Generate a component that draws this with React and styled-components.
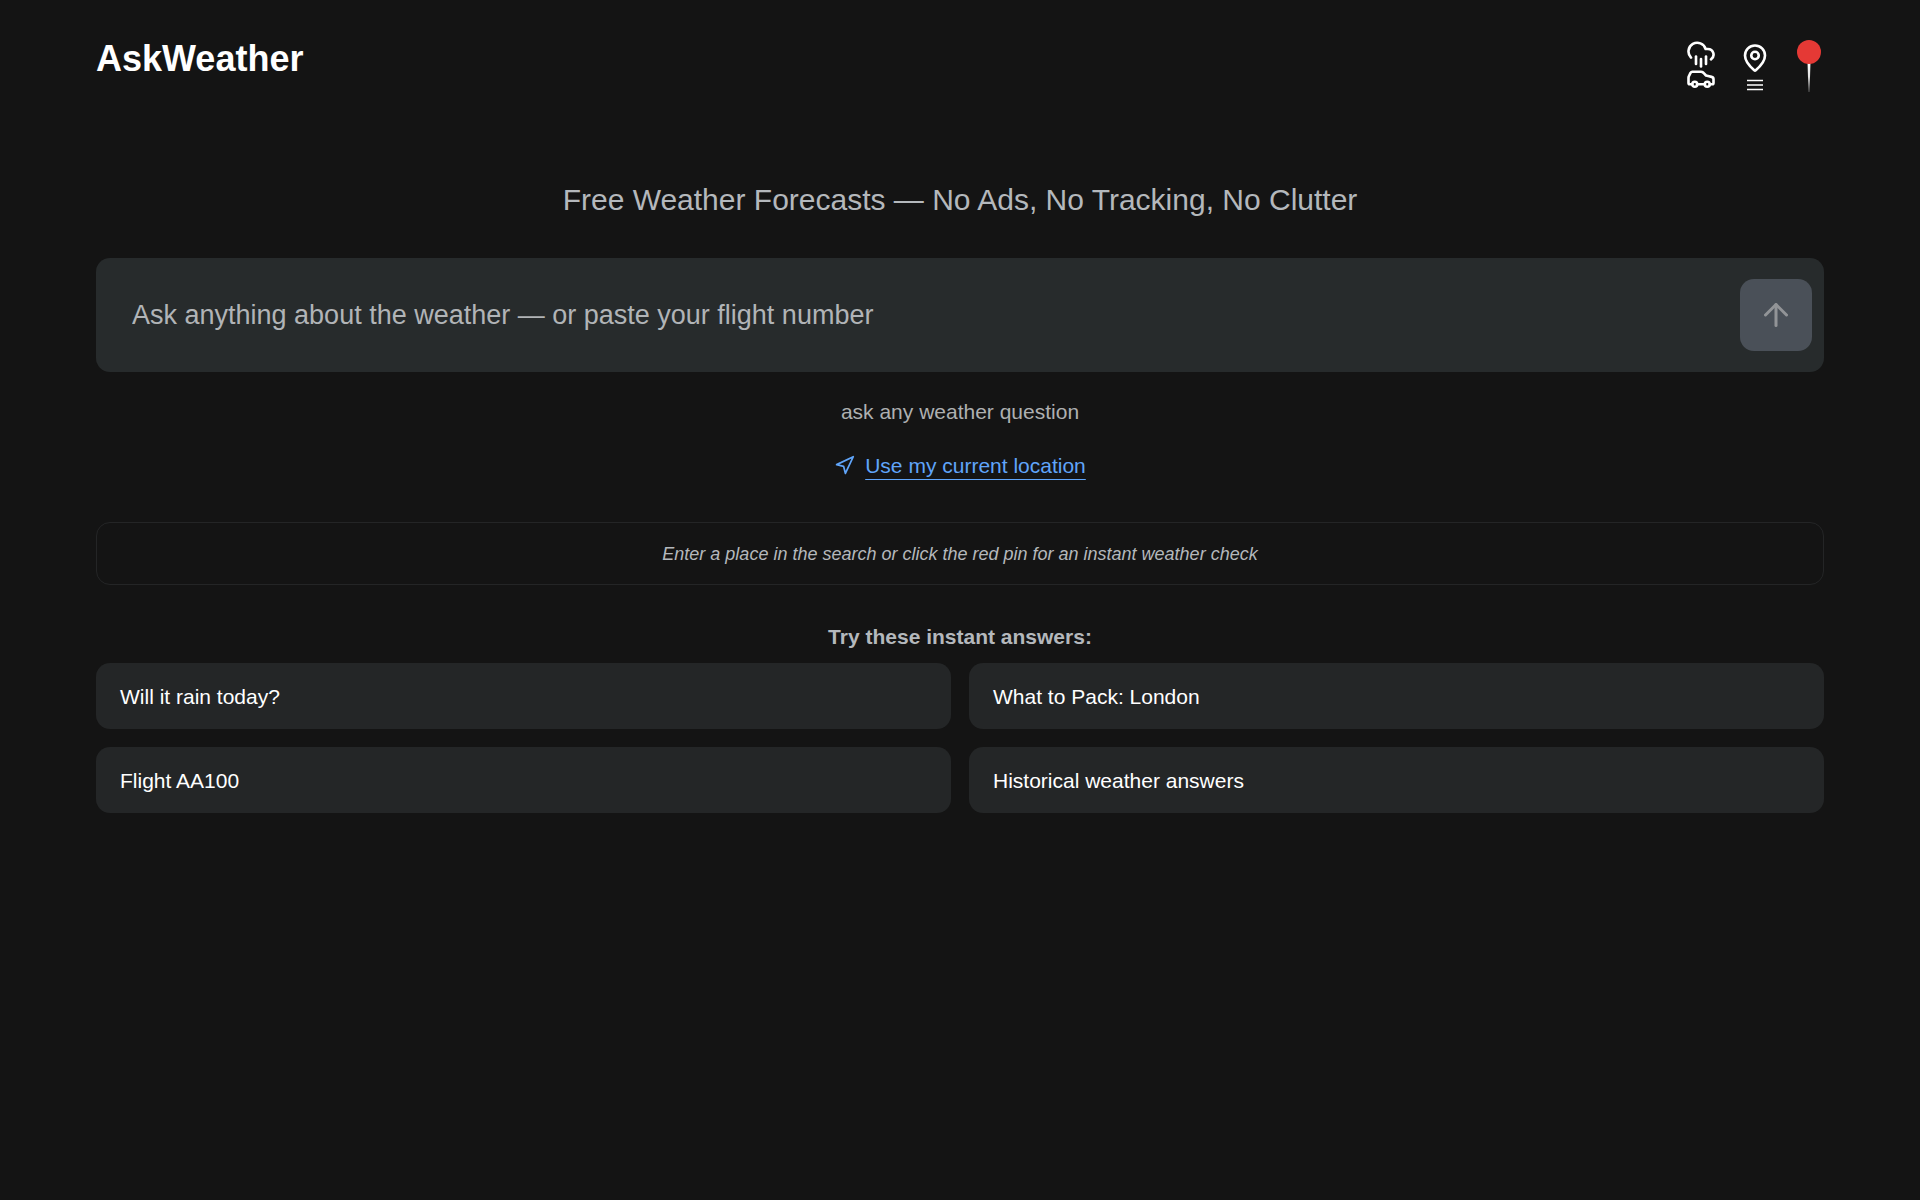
import React, { useState } from "react";
import styled, { createGlobalStyle } from "styled-components";
import { ArrowUp, Car, CloudRain, MapPin, Navigation } from "lucide-react";

const GlobalStyle = createGlobalStyle`
  * {
    box-sizing: border-box;
  }

  body {
    margin: 0;
    background: #141414;
    color: #ffffff;
    font-family: "Liberation Sans", Arial, sans-serif;
  }

  button,
  input {
    font-family: inherit;
  }
`;

const Page = styled.div`
  padding: 36px 96px;

  @media screen and (max-width: 568px) {
    padding: 24px 16px;
  }
`;

const Header = styled.header`
  display: flex;
  justify-content: space-between;
  align-items: flex-start;
  height: 60px;
`;

const Brand = styled.h1`
  margin: 0;
  font-size: 36px;
  line-height: 45px;
`;

const Nav = styled.nav`
  display: flex;
  gap: 24px;
`;

const IconButton = styled.button`
  display: flex;
  flex-direction: column;
  align-items: center;
  justify-content: flex-start;
  width: 30px;
  height: 60px;
  padding: ${(props) => props.$top || 0}px 0 0;
  border: 0;
  background: none;
  color: #ffffff;
  cursor: pointer;

  svg {
    flex-shrink: 0;
  }
`;

const CarIcon = styled(Car)`
  margin-top: -6px;
`;

const Lines = styled.svg`
  margin-top: 6px;
`;

const Tagline = styled.h2`
  margin: 84px 0 38px;
  color: #b4b8bc;
  font-size: 30px;
  font-weight: 400;
  line-height: 40px;
  text-align: center;
`;

const SearchForm = styled.form`
  display: flex;
  align-items: center;
  padding: 21px 12px 21px 36px;
  border-radius: 14px;
  background: #272b2c;
`;

const SearchInput = styled.input`
  flex: 1;
  min-width: 0;
  height: 72px;
  padding: 0;
  border: 0;
  outline: 0;
  background: none;
  color: #ffffff;
  font-size: 27px;

  &::placeholder {
    color: #b1b4b7;
    opacity: 1;
  }
`;

const SendButton = styled.button`
  display: flex;
  align-items: center;
  justify-content: center;
  width: 72px;
  height: 72px;
  padding: 0;
  border: 0;
  border-radius: 14px;
  background: #4a5058;
  color: #929497;
`;

const Hint = styled.p`
  margin: 24px 0 22px;
  color: #aeb0b1;
  font-size: 21px;
  line-height: 32px;
  text-align: center;
`;

const LocationRow = styled.div`
  display: flex;
  justify-content: center;
`;

const LocationLink = styled.a`
  display: flex;
  align-items: center;
  gap: 10px;
  color: #60a5fa;
  font-size: 21px;
  line-height: 32px;
  text-decoration: none;

  svg {
    margin-bottom: 2px;
  }

  span {
    text-decoration: underline;
    text-decoration-thickness: 1px;
    text-underline-offset: 6px;
  }
`;

const Notice = styled.p`
  margin: 40px 0 36px;
  padding: 19px 18px 17px;
  border: 1px solid #242526;
  border-radius: 14px;
  color: #b4b8bc;
  font-size: 18px;
  font-style: italic;
  line-height: 25px;
  text-align: center;
`;

const AnswersTitle = styled.h3`
  margin: 0 0 10px;
  color: #b4b8bc;
  font-size: 21px;
  line-height: 32px;
  text-align: center;
`;

const Answers = styled.div`
  display: grid;
  grid-template-columns: 1fr 1fr;
  gap: 18px;
`;

const AnswerButton = styled.button`
  padding: 18px 24px 16px;
  border: 0;
  border-radius: 14px;
  background: #242627;
  color: #ffffff;
  font-size: 21px;
  line-height: 32px;
  text-align: left;
  cursor: pointer;
`;

const ListLines = () => (
  <Lines width="16" height="12" viewBox="0 0 16 12" aria-hidden="true">
    <path
      d="M0 1.5h16M0 6h16M0 10.5h16"
      stroke="currentColor"
      strokeWidth="1.6"
    />
  </Lines>
);

const RedPin = () => (
  <svg width="26" height="54" viewBox="0 0 26 54" aria-hidden="true">
    <defs>
      <linearGradient id="needle" x1="0" y1="0" x2="0" y2="1">
        <stop offset="0" stopColor="#ffffff" />
        <stop offset="0.5" stopColor="#e0e0e0" />
        <stop offset="1" stopColor="#555555" />
      </linearGradient>
    </defs>
    <path d="M11.5 22h3l-1 30h-1z" fill="url(#needle)" />
    <circle cx="13" cy="12" r="12" fill="#e53935" />
  </svg>
);

const answers = [
  "Will it rain today?",
  "What to Pack: London",
  "Flight AA100",
  "Historical weather answers",
];

const App = () => {
  const [question, setQuestion] = useState("");

  return (
    <Page>
      <GlobalStyle />
      <Header>
        <Brand>AskWeather</Brand>
        <Nav>
          <IconButton type="button" aria-label="Road trip weather" $top={3}>
            <CloudRain size={30} strokeWidth={2.1} />
            <CarIcon size={30} strokeWidth={2.1} />
          </IconButton>
          <IconButton type="button" aria-label="Saved places" $top={7}>
            <MapPin size={30} strokeWidth={2.1} />
            <ListLines />
          </IconButton>
          <IconButton type="button" aria-label="Instant weather check" $top={4}>
            <RedPin />
          </IconButton>
        </Nav>
      </Header>

      <main>
        <Tagline>Free Weather Forecasts — No Ads, No Tracking, No Clutter</Tagline>
        <SearchForm onSubmit={(e) => e.preventDefault()}>
          <SearchInput
            aria-label="Weather question"
            placeholder="Ask anything about the weather — or paste your flight number"
            value={question}
            onChange={(e) => setQuestion(e.target.value)}
          />
          <SendButton type="submit" aria-label="Ask">
            <ArrowUp size={36} />
          </SendButton>
        </SearchForm>
        <Hint>ask any weather question</Hint>
        <LocationRow>
          <LocationLink href="#location">
            <Navigation size={21} />
            <span>Use my current location</span>
          </LocationLink>
        </LocationRow>
        <Notice>
          Enter a place in the search or click the red pin for an instant weather check
        </Notice>
        <AnswersTitle>Try these instant answers:</AnswersTitle>
        <Answers>
          {answers.map((item) => (
            <AnswerButton key={item} type="button" onClick={() => setQuestion(item)}>
              {item}
            </AnswerButton>
          ))}
        </Answers>
      </main>
    </Page>
  );
};

export default App;
